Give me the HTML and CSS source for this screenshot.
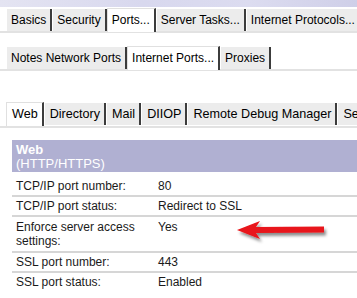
FILE: index.html
```html
<!DOCTYPE html>
<html lang="en">
<head>
    <meta charset="UTF-8">
    <title>Internet Ports - Web</title>
    <link rel="stylesheet" href="styles.css">
</head>
<body>
    <div class="band"></div>

    <div class="tabs first">
        <div class="tab">Basics</div>
        <div class="tab">Security</div>
        <div class="tab on">Ports...</div>
        <div class="tab">Server Tasks...</div>
        <div class="tab">Internet Protocols...</div>
    </div>

    <div class="tabs second">
        <div class="tab">Notes Network Ports</div>
        <div class="tab on">Internet Ports...</div>
        <div class="tab">Proxies</div>
    </div>

    <div class="tabs third">
        <div class="tab on">Web</div>
        <div class="tab">Directory</div>
        <div class="tab">Mail</div>
        <div class="tab">DIIOP</div>
        <div class="tab">Remote Debug Manager</div>
        <div class="tab">Se</div>
    </div>

    <div class="panel">
        <div class="panel-head">
            <b>Web</b>
            <span>(HTTP/HTTPS)</span>
        </div>
        <div class="row top">
            <div class="label">TCP/IP port number:</div>
            <div class="value">80</div>
        </div>
        <div class="row">
            <div class="label">TCP/IP port status:</div>
            <div class="value">Redirect to SSL</div>
        </div>
        <div class="row tall">
            <div class="label">Enforce server access settings:</div>
            <div class="value">Yes</div>
        </div>
        <div class="row">
            <div class="label">SSL port number:</div>
            <div class="value">443</div>
        </div>
        <div class="row last">
            <div class="label">SSL port status:</div>
            <div class="value">Enabled</div>
        </div>

        <!-- red arrow pointing at the setting -->
        <svg class="arrow" width="100" height="30" viewBox="0 0 100 30">
            <defs>
                <filter id="shade" x="-10%" y="-30%" width="130%" height="180%">
                    <feDropShadow dx="2" dy="3" stdDeviation="1.6" flood-color="#000" flood-opacity="0.45"/>
                </filter>
            </defs>
            <g filter="url(#shade)">
                <path d="M3 10 L26 1 L22 7 L90 6.5 L90 12.5 L22 13 L26 19 Z" fill="#e8141a"/>
            </g>
        </svg>
    </div>
</body>
</html>
```

FILE: styles.css
```css
* {
    margin: 0;
    padding: 0;
    box-sizing: border-box;
}

body {
    background-color: #fff;
    font-family: 'Liberation Sans', Arial, sans-serif;
    color: #000;
    width: 357px;
    height: 298px;
    overflow: hidden;
}

.band {
    height: 7px;
    background: linear-gradient(90deg, #e4e4f2, #d8d8ee 40%, #dcdcf0 70%, #cfcfe8);
}

.tabs {
    display: flex;
    padding-left: 6px;
    height: 24px;
    border-bottom: 2px solid #e2e2e2;
    white-space: nowrap;
}

.tabs.first {
    margin-top: 2px;
}

.tabs.second {
    margin-top: 14px;
}

.tabs.third {
    margin-top: 32px;
    height: 25px;
}

.tab {
    background-color: #ececec;
    border-left: 1px solid #fff;
    border-right: 2px solid #3c3c3c;
    padding: 0 4px;
    height: 22px;
    line-height: 22px;
    font-size: 12px;
    flex-shrink: 0;
}

.tabs.third .tab {
    font-size: 12.6px;
    padding: 0 4px 0 5px;
}

.tab.on {
    background-color: #fff;
    border-top: 1px solid #e0e0e0;
    border-left: 1px solid #e0e0e0;
    margin-top: -1px;
    height: 24px;
}

.panel {
    position: relative;
    margin: 12px 0 0 12px;
}

.panel-head {
    background-color: #b0b0d2;
    color: #fff;
    font-size: 13px;
    padding: 3px 4px 0;
    height: 32px;
    line-height: 14px;
    display: flex;
    flex-direction: column;
}

.row {
    display: flex;
    font-size: 12px;
    line-height: 14px;
    padding: 2px 4px;
    border-bottom: 2px solid #d6d6d6;
    background-color: #fff;
}

.row.top {
    padding-top: 7px;
}

.row.tall {
    padding-top: 3px;
    padding-bottom: 3px;
}

.row.last {
    border-bottom: none;
}

.label {
    width: 142px;
    color: #1a1a1a;
}

.value {
    color: #1a1a1a;
}

.arrow {
    position: absolute;
    left: 222px;
    top: 80px;
}
```
